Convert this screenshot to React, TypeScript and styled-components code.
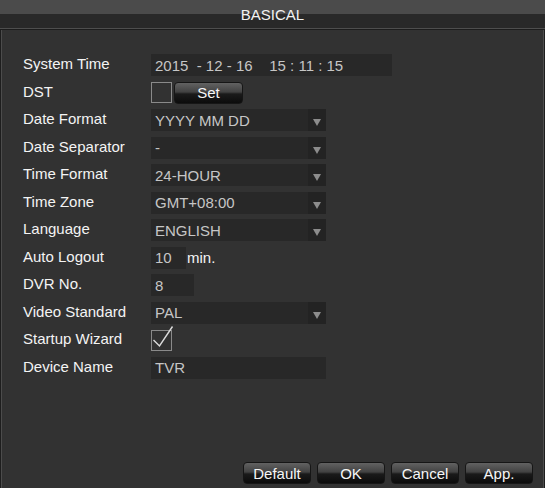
import * as React from 'react';
import styled, { createGlobalStyle } from 'styled-components';

const GlobalStyle = createGlobalStyle`
  html, body {
    margin: 0;
    padding: 0;
    background: #323232;
  }

  body {
    font-family: 'Liberation Sans', Arial, sans-serif;
  }
`;

const Window = styled.div`
  display: flex;
  flex-flow: column;
  width: 545px;
  height: 488px;
  background: #323232;
  overflow: hidden;
`;

const TitleBar = styled.div`
  display: flex;
  justify-content: center;
  align-items: center;
  height: 28px;
  background: linear-gradient(#4b4b4b 0, #4b4b4b 14px, #292929 14px, #292929 28px);
  border-bottom: 1px solid #4e4e4e;
  box-shadow: 0 1px 0 #1d1d1d;
  color: #f2f2f2;
  font-size: 15px;
`;

const Body = styled.div`
  display: flex;
  flex-flow: column;
  flex: 1;
  margin-top: 1px;
  border-left: 1px solid #1e1e1e;
  border-right: 1px solid #1e1e1e;
  box-shadow: inset 1px 0 0 #4c4c4c, inset -1px 0 0 #4c4c4c;
  padding: 24px 0 0 22px;
`;

const Form = styled.div`
  display: grid;
  grid-template-columns: 128px auto;
  grid-auto-rows: 22px;
  row-gap: 5.5px;
`;

const Label = styled.div`
  align-self: center;
  margin-top: -3px;
  color: #f4f4f4;
  font-size: 15px;
  white-space: nowrap;
`;

const Control = styled.div`
  display: flex;
  align-items: center;
  gap: 2px;
`;

const Input = styled.div<{ w: number }>`
  display: flex;
  align-items: center;
  box-sizing: border-box;
  width: ${props => props.w}px;
  height: 22px;
  padding-left: 4px;
  background: #282828;
  color: #c6c6c6;
  font-size: 15px;
  white-space: pre;
`;

const Select = styled.div`
  display: flex;
  box-sizing: border-box;
  width: 175px;
  height: 22px;
  background: #282828;
  color: #c6c6c6;
  font-size: 15px;
`;

const SelectValue = styled.span`
  display: flex;
  align-items: center;
  flex: 1;
  padding-left: 4px;
`;

const SelectArrow = styled.span`
  display: flex;
  justify-content: center;
  align-items: flex-end;
  width: 18px;
  padding-bottom: 5px;
  box-sizing: border-box;
  background: #232323;

  &:after {
    content: '';
    border-left: 4.5px solid transparent;
    border-right: 4.5px solid transparent;
    border-top: 7px solid #8c8c8c;
  }
`;

const Check = styled.span`
  position: relative;
  box-sizing: border-box;
  width: 21px;
  height: 21px;
  border: 1px solid #8a8a8a;

  svg {
    position: absolute;
    left: -1px;
    top: -6px;
  }
`;

const Unit = styled.span`
  color: #f4f4f4;
  font-size: 15px;
  margin-left: -1px;
`;

const Button = styled.button<{ w?: number }>`
  box-sizing: border-box;
  width: ${props => props.w || 68}px;
  height: 22px;
  padding: 0;
  border: 1px solid #161616;
  border-radius: 4px;
  background: linear-gradient(#626262 0%, #424242 45%, #1a1a1a 55%, #0c0c0c 100%);
  color: #f6f6f6;
  font-family: 'Liberation Sans', Arial, sans-serif;
  font-size: 15px;
`;

const Footer = styled.div`
  display: flex;
  justify-content: flex-end;
  gap: 6px;
  margin-top: auto;
  padding: 0 11px 4px 0;
`;

const Selected = ({ value }: { value: string }) => (
  <Select>
    <SelectValue>{value}</SelectValue>
    <SelectArrow />
  </Select>
);

const App = () => (
  <Window>
    <GlobalStyle />
    <TitleBar>BASICAL</TitleBar>
    <Body>
      <Form>
        <Label>System Time</Label>
        <Control>
          <Input w={241}>{'2015  - 12 - 16    15 : 11 : 15'}</Input>
        </Control>

        <Label>DST</Label>
        <Control>
          <Check />
          <Button w={69}>Set</Button>
        </Control>

        <Label>Date Format</Label>
        <Control>
          <Selected value="YYYY MM DD" />
        </Control>

        <Label>Date Separator</Label>
        <Control>
          <Selected value="-" />
        </Control>

        <Label>Time Format</Label>
        <Control>
          <Selected value="24-HOUR" />
        </Control>

        <Label>Time Zone</Label>
        <Control>
          <Selected value="GMT+08:00" />
        </Control>

        <Label>Language</Label>
        <Control>
          <Selected value="ENGLISH" />
        </Control>

        <Label>Auto Logout</Label>
        <Control>
          <Input w={35}>10</Input>
          <Unit>min.</Unit>
        </Control>

        <Label>DVR No.</Label>
        <Control>
          <Input w={43}>8</Input>
        </Control>

        <Label>Video Standard</Label>
        <Control>
          <Selected value="PAL" />
        </Control>

        <Label>Startup Wizard</Label>
        <Control>
          <Check>
            <svg width="24" height="26" viewBox="0 0 24 26">
              <polyline
                points="2.5,15 8.5,21 21.5,1.5"
                fill="none"
                stroke="#dcdcdc"
                strokeWidth="1.4"
              />
            </svg>
          </Check>
        </Control>

        <Label>Device Name</Label>
        <Control>
          <Input w={175}>TVR</Input>
        </Control>
      </Form>
      <Footer>
        <Button>Default</Button>
        <Button>OK</Button>
        <Button>Cancel</Button>
        <Button>App.</Button>
      </Footer>
    </Body>
  </Window>
);

export default App;
